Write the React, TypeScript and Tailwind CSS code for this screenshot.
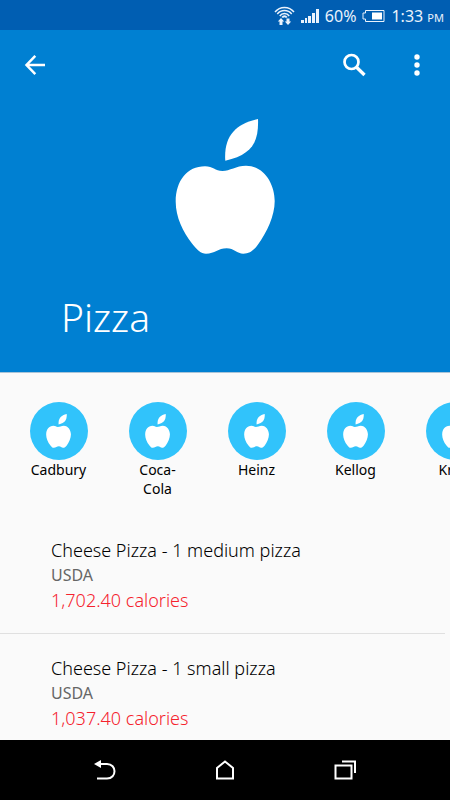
import type { ReactNode } from "react";

const brands = ["Cadbury", "Coca-Cola", "Heinz", "Kellog", "Kraft"];

const foods = [
  { name: "Cheese Pizza - 1 medium pizza", source: "USDA", calories: "1,702.40 calories" },
  { name: "Cheese Pizza - 1 small pizza", source: "USDA", calories: "1,037.40 calories" },
];

function Apple({ className }: { className: string }) {
  return (
    <svg viewBox="0 0 100 136" fill="currentColor" className={className} aria-hidden="true">
      <path d="M83 0C84 24 76 36 50.3 41.7C48.5 17 61 4.5 83 0Z" />
      <path d="M30 47.3C38 47.3 40 52 47.5 52C55 52 61 46.7 71 46.7C89 46.7 99.7 65 99.7 82C99.7 97 92 113 83 125.5C78 132.5 74 134.7 68.3 134.7C62 134.7 59 129.3 51.7 129.3C43 129.3 40 134.7 31 134.7C26 134.7 22 131 17 124.5C8 113 .7 98 .7 82.7C.7 62 12 47.3 30 47.3Z" />
    </svg>
  );
}

function StatusBar() {
  return (
    <div className="flex h-[30px] shrink-0 items-center justify-end gap-[6px] bg-[#005eb2] pt-[2px] pr-[6px] text-[16px] text-[#eaf2fc]">
      <svg width="21" height="20" viewBox="0 0 21 20" fill="none" stroke="currentColor" strokeWidth="1.5" aria-hidden="true">
        <path d="M1 6C6 0 15 0 20 6M3.3 8C7 3.4 14 3.4 17.7 8M5.8 10C8 6.7 13 6.7 15.2 10" />
        <path d="M8.2 11.5C9.5 9.8 11.5 9.8 12.8 11.5" strokeWidth="2" />
        <path d="M7 12L10.2 15.5H8.5V19H5.500V15.5H3.8ZM14 19L17.2 15.5H15.5V12.5H12.5V15.5H10.8Z" fill="currentColor" stroke="none" />
      </svg>
      <svg width="18" height="14" viewBox="0 0 18 14" fill="currentColor" aria-hidden="true">
        <path d="M0 11h3v3H0zM4 9h2v5H4zM7 7h3v7H7zM11 4h3v10h-3zM15 0h3v14h-3z" />
      </svg>
      <span>60%</span>
      <svg width="23" height="12" viewBox="0 0 23 12" fill="none" stroke="currentColor" aria-hidden="true">
        <path d="M3.5 .5H22V11.5H3.5V9H1V3H3.5Z" />
        <path d="M10 2.5H20V9.5H10Z" fill="white" stroke="none" />
      </svg>
      <span>
        1:33 <span className="text-[11px]">PM</span>
      </span>
    </div>
  );
}

function NavButton({ label, children }: { label: string; children: ReactNode }) {
  return (
    <button type="button" aria-label={label} className="flex flex-1 items-center justify-center">
      <svg width="24" height="24" viewBox="0 0 24 24" fill="none" stroke="currentColor" strokeWidth="2" aria-hidden="true">
        {children}
      </svg>
    </button>
  );
}

export default function App() {
  return (
    <div className="flex h-screen flex-col bg-[#fafafa] font-['Noto_Sans','Open_Sans',sans-serif] text-black">
      <StatusBar />
      <header className="shrink-0 border-b border-[#a9c4d8] bg-[#0080d2] text-white">
        <div className="flex h-[70px] items-center pr-[22px] pl-[23px]">
          <button type="button" aria-label="Back" className="mr-auto">
            <svg width="24" height="24" viewBox="0 0 24 24" fill="none" stroke="currentColor" strokeWidth="2.5" aria-hidden="true">
              <path d="M22 12H4M12.3 2.8L3.5 12L12.3 21.2" />
            </svg>
          </button>
          <button type="button" aria-label="Search" className="mr-10">
            <svg width="24" height="24" viewBox="0 0 24 24" fill="none" stroke="currentColor" strokeWidth="2.7" aria-hidden="true">
              <circle cx="9.5" cy="9" r="7" />
              <path d="M14.3 14L22.5 22" strokeWidth="3.3" />
            </svg>
          </button>
          <button type="button" aria-label="More options" className="px-2">
            <svg width="6" height="22" viewBox="0 0 6 22" fill="currentColor" aria-hidden="true">
              <circle cx="3" cy="3" r="2.7" />
              <circle cx="3" cy="11" r="2.7" />
              <circle cx="3" cy="19" r="2.7" />
            </svg>
          </button>
        </div>
        <Apple className="mx-auto mt-[19px] h-[136px] w-[100px]" />
        <h1 className="px-[61px] pt-8 pb-[25px] text-[39px] leading-[60px] font-light">Pizza</h1>
      </header>
      <main className="min-h-0 flex-1 overflow-hidden">
        <ul className="flex overflow-hidden pt-[29px] pb-[18px] pl-[9px]">
          {brands.map((brand) => (
            <li key={brand} className="flex w-[99px] shrink-0 items-start justify-center">
              <button type="button" className="w-[58px] text-center text-[14px] leading-[19px]">
                <span className="flex h-[58px] items-center justify-center rounded-full bg-[#31c3fb] text-white">
                  <Apple className="h-[34px] w-[25px]" />
                </span>
                {brand}
              </button>
            </li>
          ))}
        </ul>
        <ul>
          {foods.map((food) => (
            <li key={food.name} className="mr-[5px] border-b border-[#e0e0e0] pt-[22px] pb-5 pl-[51px] leading-[25px]">
              <p className="text-[18px] font-light">{food.name}</p>
              <p className="text-[16px] text-[#666666]">{food.source}</p>
              <p className="text-[18px] font-light text-[#f5222d]">{food.calories}</p>
            </li>
          ))}
        </ul>
      </main>
      <nav className="flex h-[60px] shrink-0 bg-black px-[10%] text-white">
        <NavButton label="Back">
          <path d="M5 6H14C24 6 24 20.5 14 20.5H4" />
          <path d="M1 6L8 2V10Z" fill="currentColor" stroke="none" />
        </NavButton>
        <NavButton label="Home">
          <path d="M4 20.5V10L12 3.5L20 10V20.5Z" />
        </NavButton>
        <NavButton label="Recent apps">
          <path d="M2.5 7.5H18.5V20.5H2.5ZM9 3.5H22V15" />
        </NavButton>
      </nav>
    </div>
  );
}
